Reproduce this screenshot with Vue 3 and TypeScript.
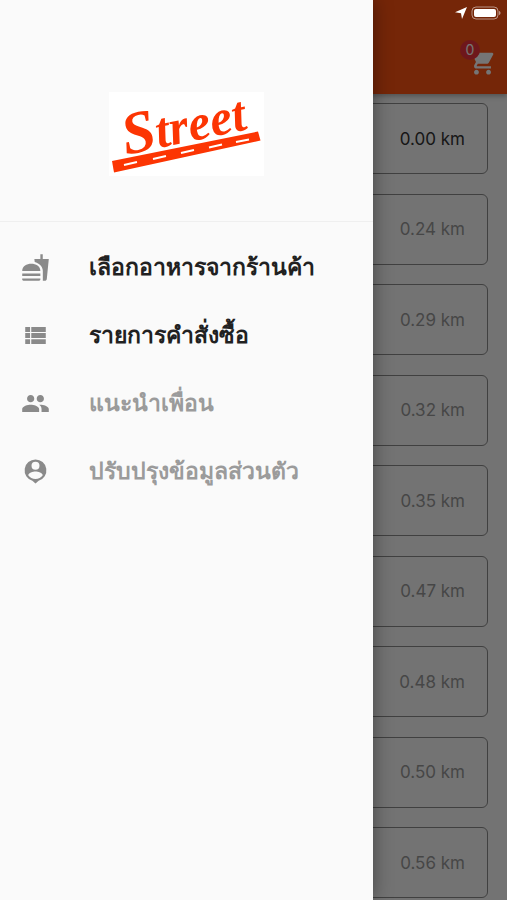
<script setup lang="ts">
import { computed, ref } from 'vue'

interface MenuItem {
  label: string
  icon: string
  muted: boolean
}

interface Shop {
  distance: number
  open: boolean
}

const menu: MenuItem[] = [
  {
    label: 'เลือกอาหารจากร้านค้า',
    muted: false,
    icon: 'M18.06 22.99h1.66c.84 0 1.53-.64 1.63-1.46L23 5.05h-5V1h-1.97v4.05h-4.97l.3 2.34c1.71.47 3.31 1.32 4.27 2.26 1.44 1.42 2.43 2.89 2.43 5.29v8.05zM1 21.99V21h15.03v.99c0 .55-.45 1-1.01 1H2.01c-.56 0-1.01-.45-1.01-1zm15.03-7c0-8-15.03-8-15.03 0h15.03zM1.02 17h15v2h-15z',
  },
  {
    label: 'รายการคำสั่งซื้อ',
    muted: false,
    icon: 'M3.5 14h4v-4h-4v4zm0 5h4v-4h-4v4zM3.5 9h4V5h-4v4zm5 5h12v-4h-12v4zm0 5h12v-4h-12v4zM8.5 5v4h12V5z',
  },
  {
    label: 'แนะนำเพื่อน',
    muted: true,
    icon: 'M16 11c1.66 0 2.99-1.34 2.99-3S17.66 5 16 5c-1.66 0-3 1.34-3 3s1.34 3 3 3zm-8 0c1.66 0 2.99-1.34 2.99-3S9.66 5 8 5C6.34 5 5 6.34 5 8s1.34 3 3 3zm0 2c-2.33 0-7 1.17-7 3.5V19h14v-2.5c0-2.33-4.67-3.5-7-3.5zm8 0c-.29 0-.62.02-.97.05 1.16.84 1.97 1.97 1.97 3.45V19h6v-2.5c0-2.33-4.67-3.5-7-3.5z',
  },
  {
    label: 'ปรับปรุงข้อมูลส่วนตัว',
    muted: true,
    icon: 'M12 2a9 9 0 0 0-2.6 17.62L12 22l2.6-2.38A9 9 0 0 0 12 2zm0 2a3.3 3.3 0 1 1 0 6.6A3.3 3.3 0 0 1 12 4zm0 14.2c-2.5 0-4.7-1.3-6-3.2 0-2 4-3.1 6-3.1s6 1.1 6 3.1c-1.3 1.9-3.5 3.2-6 3.2z',
  },
]

const shops: Shop[] = [0, 0.24, 0.29, 0.32, 0.35, 0.47, 0.48, 0.5, 0.56].map((distance, i) => ({
  distance,
  open: i === 0,
}))

const cart = ref<string[]>([])
const cartCount = computed(() => cart.value.length)
</script>

<template>
  <div class="screen">
    <header class="appbar">
      <button class="cart" type="button" aria-label="Cart">
        <svg class="icon" viewBox="0 0 24 24" aria-hidden="true">
          <path d="M7 18c-1.1 0-1.99.9-1.99 2S5.9 22 7 22s2-.9 2-2-.9-2-2-2zM1 2v2h2l3.6 7.59-1.35 2.45c-.16.28-.25.61-.25.96 0 1.1.9 2 2 2h12v-2H7.42c-.14 0-.25-.11-.25-.25l.03-.12.9-1.63h7.45c.75 0 1.41-.41 1.75-1.03l3.58-6.49A1 1 0 0 0 20 4H5.21l-.94-2H1zm16 16c-1.1 0-1.99.9-1.99 2s.89 2 1.99 2 2-.9 2-2-.9-2-2-2z" />
        </svg>
        <span class="badge">{{ cartCount }}</span>
      </button>
    </header>

    <main class="shops">
      <article v-for="shop in shops" :key="shop.distance" class="shop" :class="{ open: shop.open }">
        {{ shop.distance.toFixed(2) }} km
      </article>
    </main>

    <div class="scrim"></div>

    <div class="status" aria-hidden="true">
      <svg class="location" viewBox="0 0 12 12"><path d="M12 0 7 12 6 6.2 0 5.2z" /></svg>
      <svg class="battery" viewBox="0 0 30 14">
        <rect class="shell" x="1" y="1" width="26" height="12" rx="4" />
        <rect x="3" y="3" width="22" height="8" rx="2" />
        <path class="tip" d="M28 5c2 .5 2 3.5 0 4z" />
      </svg>
    </div>

    <aside class="drawer">
      <div class="brand">
        <svg class="logo" viewBox="0 0 155 84" role="img" aria-label="Street">
          <rect class="paper" width="155" height="84" />
          <text class="word" x="17" y="63" transform="rotate(-12 17 63)"><tspan class="initial">S</tspan>treet</text>
          <path class="road" d="M3 69 149 39.5l2.5 9L5 80.5z" />
          <path class="lane" d="m15 73 13-3m16-3 13-3m15-3 13-3m15-2.5 13-3m14-2.5 13-2.5" />
        </svg>
      </div>
      <nav class="menu">
        <a v-for="item in menu" :key="item.label" href="#" class="item" :class="{ muted: item.muted }">
          <svg class="icon" viewBox="0 0 24 24" aria-hidden="true"><path fill-rule="evenodd" :d="item.icon" /></svg>
          <span>{{ item.label }}</span>
        </a>
      </nav>
    </aside>
  </div>
</template>

<style>
body {
  margin: 0;
  background: #fafafa;
}
</style>

<style scoped>
.screen {
  position: relative;
  display: flex;
  flex-direction: column;
  min-height: 100vh;
  background: #fafafa;
  font-family: Inter, Roboto, "Noto Sans", sans-serif;
}

.icon {
  flex: none;
  width: 29px;
  height: 29px;
  fill: currentColor;
}

.appbar {
  display: flex;
  justify-content: flex-end;
  align-items: flex-end;
  box-sizing: border-box;
  height: 94px;
  padding: 0 10px 17px;
  background: #ff5313;
  box-shadow: 0 2px 5px rgba(0, 0, 0, 0.3);
}

.cart {
  position: relative;
  display: flex;
  padding: 0;
  border: 0;
  background: none;
  color: #fff;
}

.badge {
  position: absolute;
  top: -8px;
  left: -8px;
  width: 20px;
  height: 20px;
  border-radius: 50%;
  background: #f0343c;
  font: 14px/20px Inter, sans-serif;
  text-align: center;
}

.shops {
  display: flex;
  flex: 1;
  flex-direction: column;
  justify-content: space-between;
  gap: 16px;
  padding: 9px 19px 2px;
}

.shop {
  display: flex;
  align-items: center;
  justify-content: flex-end;
  box-sizing: border-box;
  height: 71px;
  padding: 0 22px;
  border: 1px solid #8c8c8c;
  border-radius: 6px;
  color: #9a9a9a;
  font-size: 17px;
}

.shop.open {
  color: #333;
}

.scrim {
  position: absolute;
  inset: 0;
  background: rgba(0, 0, 0, 0.54);
}

.status {
  position: absolute;
  top: 6px;
  right: 6px;
  display: flex;
  align-items: center;
  gap: 4px;
  fill: #fff;
}

.location {
  width: 12px;
  height: 12px;
}

.battery {
  width: 30px;
  height: 14px;
}

.shell {
  fill: none;
  stroke: #fff;
  stroke-opacity: 0.5;
}

.tip {
  fill-opacity: 0.5;
}

.drawer {
  position: absolute;
  top: 0;
  bottom: 0;
  left: 0;
  width: 73.5%;
  background: #fafafa;
  box-shadow: 0 0 18px rgba(0, 0, 0, 0.4);
}

.brand {
  display: flex;
  justify-content: center;
  padding: 92px 0 45px;
  border-bottom: 1px solid #efefef;
}

.logo {
  width: 155px;
  height: 84px;
  overflow: visible;
}

.paper {
  fill: #fff;
}

.word {
  fill: #fc3503;
  font: italic bold 50px "Liberation Serif", serif;
}

.initial {
  font-size: 60px;
}

.road {
  fill: #fc3503;
}

.lane {
  fill: none;
  stroke: #fff;
  stroke-width: 2;
}

.menu {
  display: flex;
  flex-direction: column;
  padding: 11px 0;
}

.item {
  display: flex;
  align-items: center;
  gap: 39px;
  height: 68px;
  padding: 0 21px;
  color: #212121;
  font-size: 23px;
  font-weight: 600;
  text-decoration: none;
  white-space: nowrap;
}

.item.muted {
  color: #9b9b9b;
}

.item .icon {
  color: #8a8a8a;
}
</style>
